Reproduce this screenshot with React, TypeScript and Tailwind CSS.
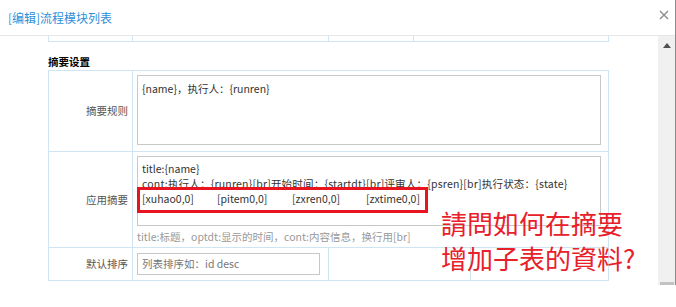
import React from 'react';

const line = 'border-[#cfe5f3]';

function Label({ text }: { text: string }) {
  return (
    <div className={`flex items-center justify-end border-r ${line} pr-[4px] text-[#555]`}>{text}</div>
  );
}

export default function App() {
  return (
    <div
      className="relative h-[307px] w-[676px] overflow-hidden bg-white text-[10.5px] text-[#333]"
      style={{ fontFamily: '"Noto Sans CJK SC", "Microsoft YaHei", sans-serif' }}
    >
      <div className="h-[285px] w-[676px] border-r border-[#8a8a8a]">
        {/* header */}
        <div className="flex h-[36px] items-center justify-between border-b border-[#e6e6e6] pl-[8px] pr-[6px]">
          <span className="text-[12px] text-[#2f8fd8]">[编辑]流程模块列表</span>
          <svg width="10" height="10" viewBox="0 0 10 10" className="mb-[6px]">
            <path d="M1 1 L9 9 M9 1 L1 9" stroke="#8c8c8c" strokeWidth="1.4" />
          </svg>
        </div>

        <div className="flex h-[249px]">
          {/* content */}
          <div className="w-[658px] pl-[48px]">
            <div className={`grid h-[6px] w-[561px] grid-cols-[84px_196px_85px_196px] border-x border-b ${line}`}>
              <div className={`border-r ${line}`} />
              <div className={`border-r ${line}`} />
              <div className={`border-r ${line}`} />
              <div />
            </div>

            <div className="h-[28px] pt-[13px] leading-[14px] font-bold text-black">摘要设置</div>

            <div className={`w-[561px] border ${line}`}>
              <div className={`grid h-[81px] grid-cols-[84px_1fr] border-b ${line}`}>
                <Label text="摘要规则" />
                <div className="pl-[4px] pr-[7px] pt-[4px]">
                  <div className="h-[70px] border border-[#c8c8c8] px-[4px] pt-[5px] leading-[15px]">
                    {'{name}，执行人：{runren}'}
                  </div>
                </div>
              </div>

              <div className={`grid h-[96px] grid-cols-[84px_1fr] border-b ${line}`}>
                <Label text="应用摘要" />
                <div className="pl-[4px] pr-[7px] pt-[4px]">
                  <div className="h-[70px] border border-[#c8c8c8] px-[4px] pt-[4px] leading-[15px]">
                    <div>{'title:{name}'}</div>
                    <div className="whitespace-nowrap tracking-[0.2px]">
                      {'cont:执行人：{runren}[br]开始时间：{startdt}[br]评审人：{psren}[br]执行状态：{state}'}
                    </div>
                    <div className="flex">
                      <span className="w-[75px]">[xuhao0,0]</span>
                      <span className="w-[75px]">[pitem0,0]</span>
                      <span className="w-[74px]">[zxren0,0]</span>
                      <span>[zxtime0,0]</span>
                    </div>
                  </div>
                  <div className="pt-[3px] leading-[15px] text-[#999]">
                    title:标题，optdt:显示的时间，cont:内容信息，换行用[br]
                  </div>
                </div>
              </div>

              <div className="grid h-[32px] grid-cols-[84px_196px_142px_1fr]">
                <Label text="默认排序" />
                <div className={`flex items-center border-r ${line} pl-[4px]`}>
                  <div className="flex h-[22px] w-[183px] items-center border border-[#c8c8c8] px-[4px] text-[#777]">
                    列表排序如：id desc
                  </div>
                </div>
                <div className={`border-r ${line}`} />
                <div />
              </div>
            </div>
          </div>

          {/* scrollbar */}
          <div className="flex w-[17px] flex-col items-center justify-between bg-[#f0f0f0]">
            <svg width="8" height="5" viewBox="0 0 8 5" className="mt-[7px]">
              <path d="M0 5 L4 0 L8 5 Z" fill="#505050" />
            </svg>
            <div className="h-[3px] w-[14px] bg-[#c2c2c2]" />
          </div>
        </div>
      </div>

      {/* annotation */}
      <div className="absolute left-[137px] top-[187px] h-[26px] w-[291px] border-[3px] border-[#e8141f]" />
      <div
        className="absolute left-[441px] top-[205px] text-[26px] leading-[35px] text-[#e8202a]"
        style={{ fontFamily: '"Noto Sans CJK TC", sans-serif' }}
      >
        <div>請問如何在摘要</div>
        <div>增加子表的資料?</div>
      </div>
    </div>
  );
}
